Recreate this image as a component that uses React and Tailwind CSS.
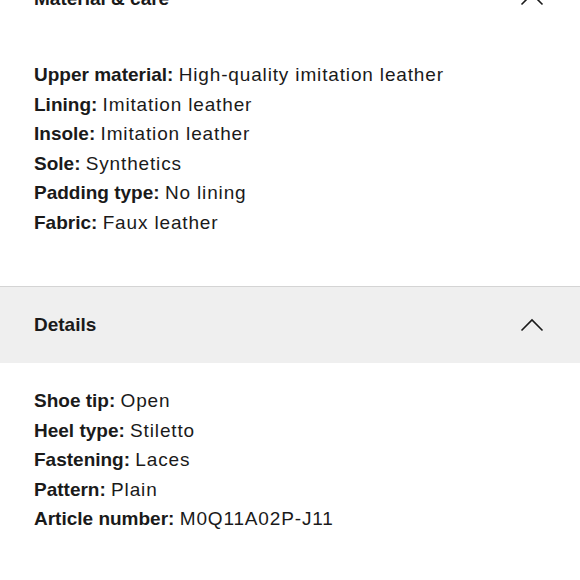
import React from "react";

const materials = [
  ["Upper material", "High-quality imitation leather"],
  ["Lining", "Imitation leather"],
  ["Insole", "Imitation leather"],
  ["Sole", "Synthetics"],
  ["Padding type", "No lining"],
  ["Fabric", "Faux leather"],
];

const details = [
  ["Shoe tip", "Open"],
  ["Heel type", "Stiletto"],
  ["Fastening", "Laces"],
  ["Pattern", "Plain"],
  ["Article number", "M0Q11A02P-J11"],
];

const ChevronUp = () => (
  <svg width="24" height="14" viewBox="0 0 24 14" fill="none" className="shrink-0">
    <polyline points="1.5,12.5 12,2 22.5,12.5" stroke="#1a1a1a" strokeWidth="1.6" />
  </svg>
);

const Section = ({ title, items, active, last }) => (
  <div>
    <div
      className={`h-[76px] px-[34px] pr-[36px] flex items-center justify-between ${
        active ? "bg-[#efefef]" : "bg-white"
      }`}
    >
      <h2 className="text-[19px] font-bold text-[#1a1a1a]">{title}</h2>
      <ChevronUp />
    </div>
    <ul className={`px-[34px] pt-[23px] ${last ? "pb-[46px]" : "pb-[49px]"}`}>
      {items.map(([label, value]) => (
        <li key={label} className="text-[19px] leading-[29.5px] text-[#1a1a1a]">
          <span className="font-bold">{label}:</span>{" "}
          <span className="tracking-[0.85px]">{value}</span>
        </li>
      ))}
    </ul>
  </div>
);

export default function App() {
  return (
    <div
      className="w-[580px] h-[580px] overflow-hidden bg-white"
      style={{ fontFamily: '"Liberation Sans", Arial, sans-serif' }}
    >
      <div className="-mt-[39px]">
        <Section title="Material & care" items={materials} />
        <div className="border-t border-[#d4d4d4]">
          <Section title="Details" items={details} active last />
        </div>
      </div>
    </div>
  );
}
